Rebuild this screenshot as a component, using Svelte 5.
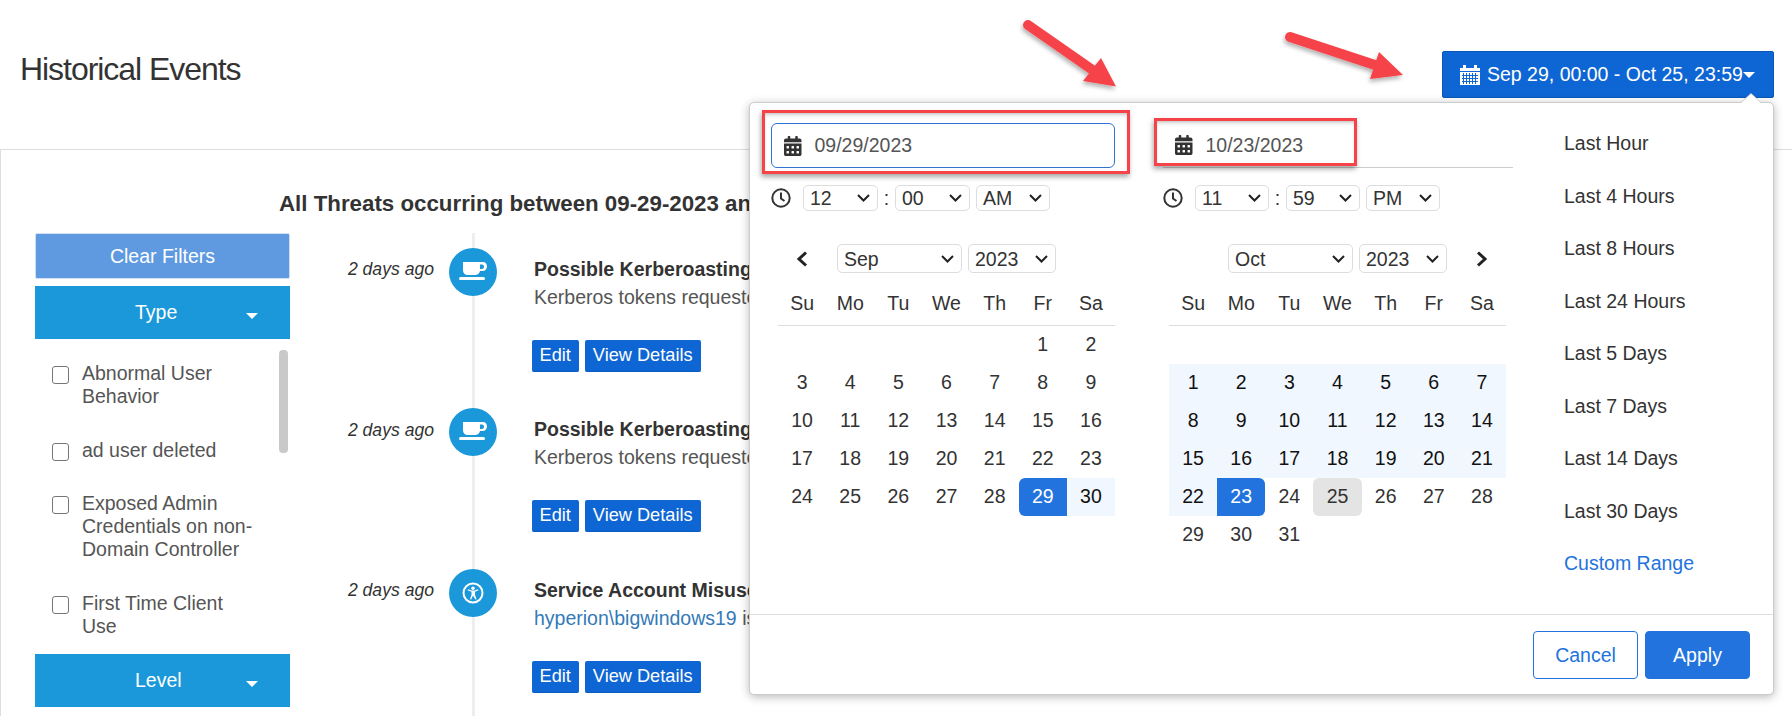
<script>
  const events = [
    { title: 'Possible Kerberoasting Attack', text: 'Kerberos tokens requested from a single host', icon: 'cup' },
    { title: 'Possible Kerberoasting Attack', text: 'Kerberos tokens requested from a single host', icon: 'cup' },
    { title: 'Service Account Misuse', link: 'hyperion\\bigwindows19', text: ' is a service account', icon: 'person' }
  ];
  const filters = [
    'Abnormal User Behavior',
    'ad user deleted',
    'Exposed Admin Credentials on non-Domain Controller',
    'First Time Client Use'
  ];
  const ranges = ['Last Hour', 'Last 4 Hours', 'Last 8 Hours', 'Last 24 Hours', 'Last 5 Days', 'Last 7 Days', 'Last 14 Days', 'Last 30 Days'];
  const weekdays = ['Su', 'Mo', 'Tu', 'We', 'Th', 'Fr', 'Sa'];

  const months = [
    { name: 'Sep', lead: 5, days: 30, start: 29, end: 30, hour: '12', minute: '00', ampm: 'AM', date: '09/29/2023', side: 'left' },
    { name: 'Oct', lead: 7, days: 31, start: 0, end: 23, hour: '11', minute: '59', ampm: 'PM', date: '10/23/2023', side: 'right' }
  ];

  function cells(m) {
    const out = [];
    for (let i = 0; i < m.lead; i++) out.push({ n: '', cls: '' });
    for (let d = 1; d <= m.days; d++) {
      let cls = '';
      if (m.side === 'left') {
        if (d === m.start) cls = 'start';
        else if (d > m.start) cls = 'range';
      } else {
        if (d === m.end) cls = 'end';
        else if (d < m.end) cls = 'range';
        else if (d === 25) cls = 'today';
      }
      out.push({ n: d, cls });
    }
    return out;
  }

  const calPath = 'M0 464c0 26.5 21.5 48 48 48h352c26.5 0 48-21.5 48-48V192H0v272zm320-196c0-6.6 5.4-12 12-12h40c6.6 0 12 5.4 12 12v40c0 6.6-5.4 12-12 12h-40c-6.6 0-12-5.4-12-12v-40zm0 128c0-6.6 5.4-12 12-12h40c6.6 0 12 5.4 12 12v40c0 6.6-5.4 12-12 12h-40c-6.6 0-12-5.4-12-12v-40zM192 268c0-6.6 5.4-12 12-12h40c6.6 0 12 5.4 12 12v40c0 6.6-5.4 12-12 12h-40c-6.6 0-12-5.4-12-12v-40zm0 128c0-6.6 5.4-12 12-12h40c6.6 0 12 5.4 12 12v40c0 6.6-5.4 12-12 12h-40c-6.6 0-12-5.4-12-12v-40zM64 268c0-6.6 5.4-12 12-12h40c6.6 0 12 5.4 12 12v40c0 6.6-5.4 12-12 12H76c-6.6 0-12-5.4-12-12v-40zm0 128c0-6.6 5.4-12 12-12h40c6.6 0 12 5.4 12 12v40c0 6.6-5.4 12-12 12H76c-6.6 0-12-5.4-12-12v-40zM400 64h-48V16c0-8.8-7.2-16-16-16h-32c-8.8 0-16 7.2-16 16v48H160V16c0-8.8-7.2-16-16-16h-32c-8.8 0-16 7.2-16 16v48H48C21.5 64 0 85.5 0 112v48h448v-48c0-26.5-21.5-48-48-48z';
</script>

<div class="page">
  <header class="top">
    <h1>Historical Events</h1>
    <button class="range-btn">
      <svg class="btn-cal" viewBox="0 0 20 20" width="20" height="20">
        <path fill="#fff" d="M0 3h3V0h3v3h8V0h3v3h3v3H0zM0 7h20v13H0z"/>
        <path stroke="#0e66d4" stroke-width="1" d="M2 10.5h16M2 13.5h16M2 16.5h16M3.5 8v11M6.5 8v11M9.5 8v11M12.5 8v11M15.5 8v11"/>
      </svg>
      <span>Sep 29, 00:00 - Oct 25, 23:59</span>
      <i class="caret"></i>
    </button>
  </header>

  <section class="panel">
    <h2>All Threats occurring between 09-29-2023 and 10-25-2023</h2>
    <div class="body">
      <aside class="filters">
        <button class="clear">Clear Filters</button>
        <div class="group"><span>Type</span><i class="caret"></i></div>
        <div class="list">
          <ul>
            {#each filters as f}
              <li><input type="checkbox" /><label>{f}</label></li>
            {/each}
          </ul>
          <div class="thumb"></div>
        </div>
        <div class="group"><span>Level</span><i class="caret"></i></div>
      </aside>

      <div class="timeline">
        {#each events as e}
          <article>
            <time>2 days ago</time>
            <div class="badge">
              {#if e.icon === 'cup'}
                <svg viewBox="0 0 28 20" width="28" height="20">
                  <path fill="#fff" fill-rule="evenodd" d="M4 0h20c2.5 0 4 2 4 4.5S26 9 24 9h-3c-.6 2.6-2.5 4-5 4H9c-3 0-5-2-5-5zM21 2.5V7h2c1.2 0 2-1 2-2.25S24.2 2.5 23 2.5z"/>
                  <rect x="0" y="15" width="26" height="3" rx="1.5" fill="#fff"/>
                </svg>
              {:else}
                <svg viewBox="0 0 22 22" width="22" height="22">
                  <circle cx="11" cy="11" r="9.5" fill="none" stroke="#fff" stroke-width="2"/>
                  <circle cx="11" cy="6.2" r="1.8" fill="#fff"/>
                  <path fill="#fff" d="M5.5 8.2l.5-1 3.5 1.3h3L16 7.2l.5 1-3.5 1.6v3l1.5 4.4-1.2.4L11 13.5l-1.8 4.1-1.2-.4 1.500-4.400v-3z"/>
                </svg>
              {/if}
            </div>
            <div class="detail">
              <h3>{e.title}</h3>
              <p>{#if e.link}<a href="#top">{e.link}</a>{/if}{e.text}</p>
              <div class="actions">
                <button>Edit</button>
                <button>View Details</button>
              </div>
            </div>
          </article>
        {/each}
      </div>
    </div>
  </section>

  <div class="picker">
    <div class="picker-main">
      {#each months as m}
        <div class="cal {m.side}">
          <div class="date-input">
            <svg viewBox="0 0 448 512" width="17.5" height="20"><path fill="#333" d={calPath}/></svg>
            <span>{m.date}</span>
          </div>
          <div class="time-row">
            <svg viewBox="0 0 20 20" width="20" height="20">
              <circle cx="10" cy="10" r="8.7" fill="none" stroke="#333" stroke-width="2"/>
              <path d="M10 4.5V10.5l3.5 2.5" fill="none" stroke="#333" stroke-width="2"/>
            </svg>
            <select class="hour"><option>{m.hour}</option></select>
            <span class="colon">:</span>
            <select class="hour"><option>{m.minute}</option></select>
            <select class="ampm"><option>{m.ampm}</option></select>
          </div>
          <div class="grid-wrap">
            <div class="month-row">
              <div class="nav">
                {#if m.side === 'left'}
                  <svg viewBox="0 0 12 16" width="12" height="16"><path d="M10 1.5L3 8l7 6.5" fill="none" stroke="#222" stroke-width="3"/></svg>
                {/if}
              </div>
              <div class="month-selects">
                <select class="month"><option>{m.name}</option></select>
                <select class="year"><option>2023</option></select>
              </div>
              <div class="nav">
                {#if m.side === 'right'}
                  <svg viewBox="0 0 12 16" width="12" height="16"><path d="M2 1.5L9 8l-7 6.5" fill="none" stroke="#222" stroke-width="3"/></svg>
                {/if}
              </div>
            </div>
            <div class="week">
              {#each weekdays as w}<span>{w}</span>{/each}
            </div>
            <div class="days">
              {#each cells(m) as c}<span class={c.cls}>{c.n}</span>{/each}
            </div>
          </div>
        </div>
      {/each}
      <ul class="ranges">
        {#each ranges as r}<li>{r}</li>{/each}
        <li class="active">Custom Range</li>
      </ul>
    </div>
    <footer>
      <button class="cancel">Cancel</button>
      <button class="apply">Apply</button>
    </footer>
  </div>

  <div class="mark mark-a"></div>
  <div class="mark mark-b"></div>

  <svg class="arrows" viewBox="0 0 1792 716" width="1792" height="716">
    <defs>
      <filter id="soft" x="-20%" y="-20%" width="140%" height="140%">
        <feDropShadow dx="-1" dy="3" stdDeviation="2" flood-color="#000" flood-opacity="0.3"/>
      </filter>
    </defs>
    <g filter="url(#soft)" fill="#f64349" stroke="#f64349" stroke-linecap="round">
      <path d="M1028 25L1094 71" stroke-width="10" fill="none"/>
      <path d="M1116 86.5L1083 81L1101 58z" stroke-width="0"/>
      <path d="M1290 37L1378 66" stroke-width="10" fill="none"/>
      <path d="M1403 75L1370 79L1379 52z" stroke-width="0"/>
    </g>
  </svg>
</div>

<style>
  :global(body) {
    margin: 0;
    background: #fff;
  }

  .page {
    position: relative;
    width: 1792px;
    height: 716px;
    overflow: hidden;
    font-family: "Liberation Sans", Arial, sans-serif;
    font-size: 19.5px;
    color: #555;
  }

  button {
    font: inherit;
    cursor: pointer;
  }

  .top {
    display: flex;
    justify-content: space-between;
    align-items: flex-start;
    height: 149px;
    box-sizing: border-box;
    padding: 51px 18px 0 20px;
  }

  h1 {
    margin: 0;
    font-size: 32px;
    font-weight: 400;
    line-height: 36px;
    color: #333;
    letter-spacing: -1.05px;
  }

  .range-btn {
    display: flex;
    align-items: center;
    width: 332px;
    height: 47px;
    box-sizing: border-box;
    padding: 0 0 0 17px;
    background: #0e66d4;
    border: 1px solid #0b57b5;
    border-radius: 2px;
    color: #fff;
    white-space: nowrap;
  }

  .range-btn span {
    margin-left: 7px;
  }

  .caret {
    display: inline-block;
    width: 0;
    height: 0;
    border-left: 6px solid transparent;
    border-right: 6px solid transparent;
    border-top: 6px solid #fff;
  }

  .panel {
    height: 567px;
    box-sizing: border-box;
    border-top: 1px solid #ddd;
    border-left: 1px solid #ddd;
  }

  h2 {
    margin: 0;
    padding: 42px 0 0 278px;
    font-size: 22.3px;
    line-height: 24px;
    color: #333;
    white-space: nowrap;
  }

  .body {
    display: flex;
    margin-top: 17px;
  }

  .filters {
    width: 255px;
    margin-left: 34px;
    flex: none;
  }

  .clear {
    display: block;
    width: 100%;
    height: 46px;
    margin-bottom: 7px;
    background: #5f9ae0;
    border: 1px solid #cfdff3;
    border-radius: 2px;
    color: #fff;
  }

  .group {
    display: flex;
    align-items: center;
    justify-content: space-between;
    height: 53px;
    padding: 0 32px 0 100px;
    background: #1a98d9;
    color: #fff;
  }

  .group span {
    width: 40px;
    text-align: center;
  }

  .group .caret {
    margin-top: 6px;
  }

  .list {
    display: flex;
    height: 315px;
    overflow: hidden;
  }

  .list ul {
    flex: 1;
    min-width: 0;
    margin: 0;
    padding: 23px 22px 0 17px;
    list-style: none;
  }

  .list li {
    display: flex;
    align-items: flex-start;
    margin-bottom: 30.5px;
    line-height: 23px;
  }

  .list input {
    flex: none;
    appearance: none;
    width: 17px;
    height: 18px;
    margin: 4px 13px 0 0;
    background: #fff;
    border: 1.5px solid #767676;
    border-radius: 3px;
    box-sizing: border-box;
  }

  .thumb {
    flex: none;
    width: 9px;
    height: 103px;
    margin: 11px 2px 0 0;
    background: #c9c9c9;
    border-radius: 4px;
  }

  .timeline {
    flex: 1;
    height: 483px;
    background: linear-gradient(#eee, #eee) 181.5px 0 / 3px 100% no-repeat;
  }

  .timeline article {
    display: flex;
    height: 160.6px;
    box-sizing: border-box;
    padding-top: 14.5px;
  }

  time {
    flex: none;
    width: 144px;
    margin-top: 11.5px;
    text-align: right;
    font-style: italic;
    font-size: 17.6px;
    line-height: 20px;
    color: #333;
  }

  .badge {
    flex: none;
    display: flex;
    align-items: center;
    justify-content: center;
    width: 48px;
    height: 48px;
    margin-left: 15px;
    border-radius: 50%;
    background: #1a98d9;
  }

  .detail {
    margin-left: 34.5px;
    white-space: nowrap;
  }

  h3 {
    margin: 8px 0 0 2.5px;
    font-size: 19.5px;
    line-height: 26px;
    color: #333;
  }

  .detail p {
    margin: 2px 0 0 2.5px;
    line-height: 26px;
  }

  .detail a {
    color: #337ab7;
    text-decoration: none;
  }

  .actions {
    display: flex;
    gap: 6px;
    margin-top: 30px;
  }

  .actions button {
    height: 32px;
    padding: 0 8px;
    background: #0e66d4;
    border: 0;
    border-bottom: 1px solid #0b5cc0;
    border-radius: 2px;
    color: #fff;
    font-size: 18.2px;
  }

  .picker {
    position: absolute;
    left: 749px;
    top: 102px;
    width: 1025px;
    height: 593px;
    box-sizing: border-box;
    display: flex;
    flex-direction: column;
    background: #fff;
    border: 1px solid #ccc;
    border-radius: 5px;
    box-shadow: 0 2px 10px rgba(0, 0, 0, 0.28);
    color: #333;
  }

  .picker::before,
  .picker::after {
    content: '';
    position: absolute;
    left: 990px;
    top: -10px;
    border-left: 11px solid transparent;
    border-right: 11px solid transparent;
    border-bottom: 10px solid #ccc;
  }

  .picker::after {
    top: -9px;
    border-bottom-color: #fff;
  }

  .picker-main {
    display: flex;
    flex: 1;
    padding: 20px 0 0 21px;
    box-sizing: border-box;
  }

  .cal {
    flex: none;
  }

  .cal.left {
    width: 344px;
    margin-right: 48px;
  }

  .cal.right {
    width: 350px;
  }

  .date-input {
    display: flex;
    align-items: center;
    gap: 13px;
    height: 45px;
    box-sizing: border-box;
    padding-left: 12px;
    color: #555;
    border: 1px solid #2f74d0;
    border-radius: 6px;
  }

  .right .date-input {
    border: 0;
    border-bottom: 1px solid #ccc;
    border-radius: 0;
  }

  .time-row {
    display: flex;
    align-items: center;
    height: 26px;
    margin-top: 17px;
  }

  .time-row svg {
    margin-right: 12px;
  }

  .colon {
    width: 17px;
    text-align: center;
  }

  select {
    appearance: none;
    box-sizing: border-box;
    font: inherit;
    color: #333;
    padding: 0 0 0 6px;
    border: 1px solid #ddd;
    border-radius: 5px;
    background: #fff url("data:image/svg+xml,%3Csvg xmlns='http://www.w3.org/2000/svg' width='13' height='8'%3E%3Cpath d='M1 1l5.5 5.5L12 1' fill='none' stroke='%23222' stroke-width='2'/%3E%3C/svg%3E") no-repeat right 7px center;
  }

  .time-row select {
    height: 26px;
  }

  .left .hour {
    width: 75px;
  }

  .right .hour {
    width: 74px;
  }

  .ampm {
    margin-left: 6px;
    width: 74px;
  }

  .grid-wrap {
    width: 337px;
    margin: 33px 0 0 7px;
  }

  .right .grid-wrap {
    margin-left: 6px;
  }

  .month-row {
    display: grid;
    grid-template-columns: 48px 1fr 48px;
    align-items: center;
    height: 29px;
  }

  .nav {
    display: flex;
    justify-content: center;
  }

  .month-selects {
    display: flex;
    justify-content: center;
    gap: 6px;
  }

  .month-selects select {
    height: 29px;
  }

  .month {
    width: 125px;
  }

  .year {
    width: 88px;
  }

  .week,
  .days {
    display: grid;
    grid-template-columns: repeat(7, 1fr);
    text-align: center;
  }

  .week {
    margin-top: 15px;
    height: 38px;
    box-sizing: border-box;
    border-bottom: 1px solid #ddd;
    line-height: 30px;
  }

  .days span {
    height: 38px;
    line-height: 36px;
  }

  .days .range {
    background: #f1f7fe;
    color: #111;
  }

  .days .start,
  .days .end {
    background: #2273dd;
    color: #fff;
  }

  .days .start {
    border-radius: 6px 0 0 6px;
  }

  .days .end {
    border-radius: 0 6px 6px 0;
  }

  .days .today {
    background: #e4e4e4;
    border-radius: 6px;
  }

  .ranges {
    list-style: none;
    margin: 0 0 0 51px;
    padding: 0;
  }

  .ranges li {
    height: 52.5px;
    line-height: 40px;
  }

  .ranges .active {
    color: #2273dd;
  }

  footer {
    display: flex;
    justify-content: flex-end;
    gap: 7px;
    height: 80px;
    box-sizing: border-box;
    padding: 16px 23px 0 0;
    border-top: 1px solid #ddd;
  }

  footer button {
    width: 105px;
    height: 48px;
    border-radius: 4px;
    border: 1px solid #2273dd;
  }

  .cancel {
    background: #fff;
    color: #2273dd;
  }

  .apply {
    background: #2273dd;
    color: #fff;
  }

  .mark {
    position: absolute;
    box-sizing: border-box;
    border: 3px solid #f64349;
    box-shadow: -1px 3px 5px rgba(0, 0, 0, 0.35), inset 0 3px 4px -2px rgba(0, 0, 0, 0.3);
  }

  .mark-a {
    left: 762px;
    top: 110px;
    width: 368px;
    height: 64px;
  }

  .mark-b {
    left: 1154px;
    top: 118px;
    width: 203px;
    height: 48px;
  }

  .arrows {
    position: absolute;
    left: 0;
    top: 0;
    pointer-events: none;
  }
</style>
